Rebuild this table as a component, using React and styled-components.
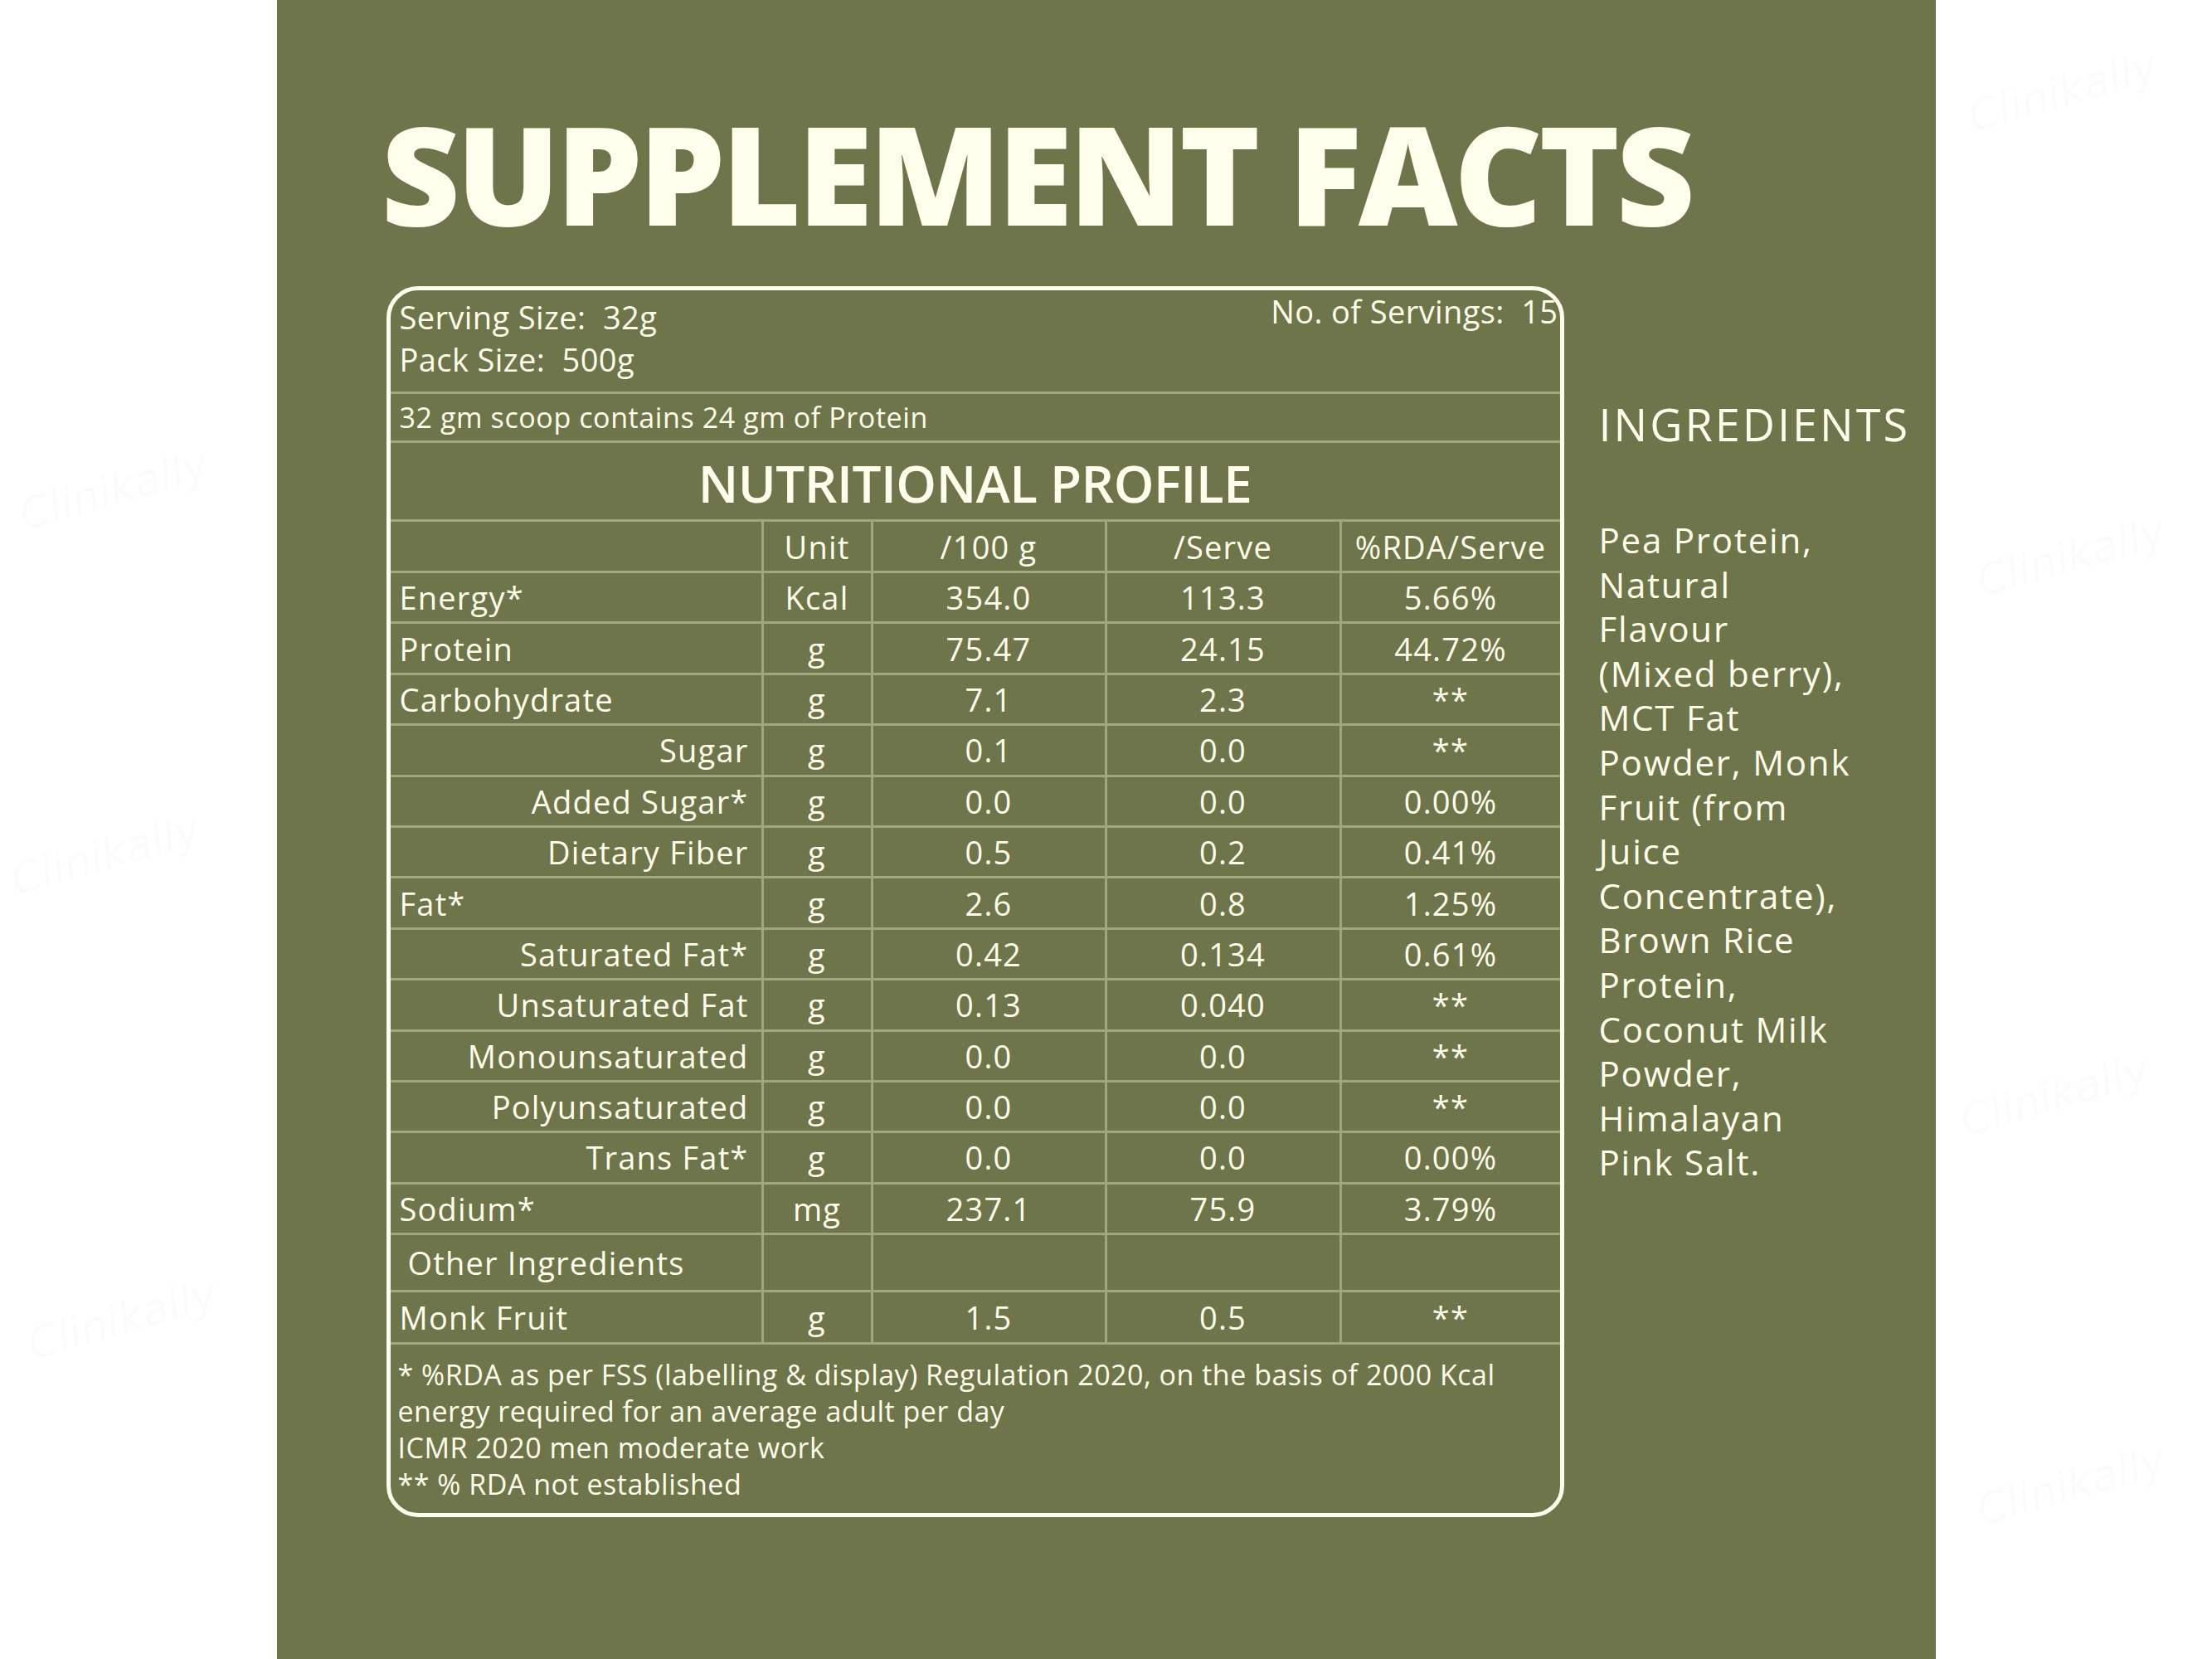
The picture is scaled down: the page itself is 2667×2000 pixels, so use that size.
import React from 'react';
import styled, { createGlobalStyle } from 'styled-components';

const CREAM = '#fffdeb';
const GREEN = '#6f754a';
const LINE = '#a2a582';

const GlobalStyle = createGlobalStyle`
    html, body {
        margin: 0;
        padding: 0;
        background: #fff;
    }
    body {
        font-family: "Open Sans", "Liberation Sans", sans-serif;
    }
`;

const Page = styled.div`
    position: relative;
    width: 2667px;
    height: 2000px;
    background: #fff;
    overflow: hidden;
    display: flex;
    justify-content: center;
`;

// faint site watermark sitting in the white margins
const Watermark = styled.div`
    position: absolute;
    left: ${p => p.$x}px;
    top: ${p => p.$y}px;
    font-family: "DejaVu Sans", sans-serif;
    font-style: italic;
    font-size: 52px;
    color: rgba(0, 0, 0, 0.016);
    transform: rotate(-16deg);
    white-space: nowrap;
`;

const Panel = styled.div`
    position: relative;
    z-index: 1;
    width: 2000px;
    height: 2000px;
    box-sizing: border-box;
    padding: 126px 0 0 126px;
    background: ${GREEN};
    color: ${CREAM};
`;

const Title = styled.h1`
    margin: 0;
    font-family: "Open Sans", sans-serif;
    font-weight: 800;
    font-size: 165px;
    line-height: 165px;
    letter-spacing: -4.5px;
    white-space: nowrap;
`;

const Body = styled.div`
    display: flex;
    align-items: flex-start;
    gap: 42px;
    margin-top: 54px;
    padding-left: 6px;
`;

const Box = styled.div`
    width: 1420px;
    height: 1484px;
    box-sizing: border-box;
    border: 5px solid ${CREAM};
    border-radius: 38px;
    overflow: hidden;
    display: flex;
    flex-direction: column;
`;

const ServingInfo = styled.div`
    height: 125px;
    box-sizing: border-box;
    border-bottom: 3px solid ${LINE};
    padding: 7px 2px 0 11px;
    display: flex;
    justify-content: space-between;
    align-items: flex-start;
    font-size: 38px;
    line-height: 51px;
    letter-spacing: 0.4px;
    white-space: pre;
`;

const Servings = styled.div`
    margin-top: -7px;
`;

const Scoop = styled.div`
    height: 59px;
    box-sizing: border-box;
    border-bottom: 3px solid ${LINE};
    padding-left: 11px;
    display: flex;
    align-items: center;
    font-size: 34px;
    letter-spacing: 0.6px;
`;

const Profile = styled.div`
    height: 95px;
    box-sizing: border-box;
    border-bottom: 3px solid ${LINE};
    padding-top: 4px;
    display: flex;
    align-items: center;
    justify-content: center;
    font-size: 62px;
    font-weight: 600;
    letter-spacing: -0.5px;
`;

const Row = styled.div`
    height: ${p => p.$h}px;
    box-sizing: border-box;
    border-bottom: 3px solid ${LINE};
    display: grid;
    grid-template-columns: 447px 132px 282px 283px 1fr;
    font-size: 38px;
    letter-spacing: 1.2px;
`;

const Cell = styled.div`
    display: flex;
    align-items: center;
    justify-content: center;
    white-space: nowrap;
    & + & {
        border-left: 3px solid ${LINE};
    }
`;

const Label = styled(Cell)`
    justify-content: ${p => (p.$indent ? 'flex-end' : 'flex-start')};
    padding: ${p => (p.$indent ? '0 15px 0 0' : `0 0 0 ${p.$pad || 11}px`)};
`;

const Footnote = styled.div`
    flex: 1;
    padding: 14px 0 0 9px;
    font-size: 34px;
    line-height: 44px;
    letter-spacing: 0.5px;
    white-space: nowrap;
`;

const Ingredients = styled.div`
    padding-top: 139px;
`;

const IngTitle = styled.h2`
    margin: 0;
    font-size: 54px;
    line-height: 54px;
    font-weight: 500;
    letter-spacing: 3px;
`;

const IngList = styled.div`
    margin-top: 86px;
    font-size: 42px;
    line-height: 53.6px;
    letter-spacing: 1.8px;
    white-space: nowrap;
`;

const rows = [
    { label: 'Energy*', unit: 'Kcal', per100: '354.0', serve: '113.3', rda: '5.66%' },
    { label: 'Protein', unit: 'g', per100: '75.47', serve: '24.15', rda: '44.72%' },
    { label: 'Carbohydrate', unit: 'g', per100: '7.1', serve: '2.3', rda: '**' },
    { label: 'Sugar', indent: true, unit: 'g', per100: '0.1', serve: '0.0', rda: '**' },
    { label: 'Added Sugar*', indent: true, unit: 'g', per100: '0.0', serve: '0.0', rda: '0.00%' },
    { label: 'Dietary Fiber', indent: true, unit: 'g', per100: '0.5', serve: '0.2', rda: '0.41%' },
    { label: 'Fat*', unit: 'g', per100: '2.6', serve: '0.8', rda: '1.25%' },
    { label: 'Saturated Fat*', indent: true, unit: 'g', per100: '0.42', serve: '0.134', rda: '0.61%' },
    { label: 'Unsaturated Fat', indent: true, unit: 'g', per100: '0.13', serve: '0.040', rda: '**' },
    { label: 'Monounsaturated', indent: true, unit: 'g', per100: '0.0', serve: '0.0', rda: '**' },
    { label: 'Polyunsaturated', indent: true, unit: 'g', per100: '0.0', serve: '0.0', rda: '**' },
    { label: 'Trans Fat*', indent: true, unit: 'g', per100: '0.0', serve: '0.0', rda: '0.00%' },
    { label: 'Sodium*', unit: 'mg', per100: '237.1', serve: '75.9', rda: '3.79%' },
];

const ingredientLines = [
    'Pea Protein,', 'Natural', 'Flavour', '(Mixed berry),', 'MCT Fat', 'Powder, Monk',
    'Fruit (from', 'Juice', 'Concentrate),', 'Brown Rice', 'Protein,', 'Coconut Milk',
    'Powder,', 'Himalayan', 'Pink Salt.',
];

const footnotes = [
    '* %RDA as per FSS (labelling & display) Regulation 2020, on the basis of 2000 Kcal',
    'energy required for an average adult per day',
    'ICMR 2020 men moderate work',
    '** % RDA not established',
];

const marks = [
    { x: 20, y: 560 }, { x: 10, y: 1000 }, { x: 30, y: 1560 },
    { x: 2370, y: 80 }, { x: 2380, y: 640 }, { x: 2360, y: 1290 }, { x: 2380, y: 1760 },
];

export default function App() {
    return (
        <Page>
            <GlobalStyle />
            {marks.map((m, i) => (
                <Watermark key={i} $x={m.x} $y={m.y}>Clinikally</Watermark>
            ))}
            <Panel>
                <Title>SUPPLEMENT FACTS</Title>
                <Body>
                    <Box>
                        <ServingInfo>
                            <div>
                                <div>Serving Size:  32g</div>
                                <div>Pack Size:  500g</div>
                            </div>
                            <Servings>No. of Servings:  15</Servings>
                        </ServingInfo>
                        <Scoop>32 gm scoop contains 24 gm of Protein</Scoop>
                        <Profile>NUTRITIONAL PROFILE</Profile>
                        <Row $h={62}>
                            <Cell />
                            <Cell>Unit</Cell>
                            <Cell>/100 g</Cell>
                            <Cell>/Serve</Cell>
                            <Cell>%RDA/Serve</Cell>
                        </Row>
                        {rows.map(r => (
                            <Row key={r.label} $h={61.4}>
                                <Label $indent={r.indent}>{r.label}</Label>
                                <Cell>{r.unit}</Cell>
                                <Cell>{r.per100}</Cell>
                                <Cell>{r.serve}</Cell>
                                <Cell>{r.rda}</Cell>
                            </Row>
                        ))}
                        <Row $h={69}>
                            <Label $pad={21}>Other Ingredients</Label>
                            <Cell />
                            <Cell />
                            <Cell />
                            <Cell />
                        </Row>
                        <Row $h={63}>
                            <Label>Monk Fruit</Label>
                            <Cell>g</Cell>
                            <Cell>1.5</Cell>
                            <Cell>0.5</Cell>
                            <Cell>**</Cell>
                        </Row>
                        <Footnote>
                            {footnotes.map(f => <div key={f}>{f}</div>)}
                        </Footnote>
                    </Box>
                    <Ingredients>
                        <IngTitle>INGREDIENTS</IngTitle>
                        <IngList>
                            {ingredientLines.map(l => <div key={l}>{l}</div>)}
                        </IngList>
                    </Ingredients>
                </Body>
            </Panel>
        </Page>
    );
}
